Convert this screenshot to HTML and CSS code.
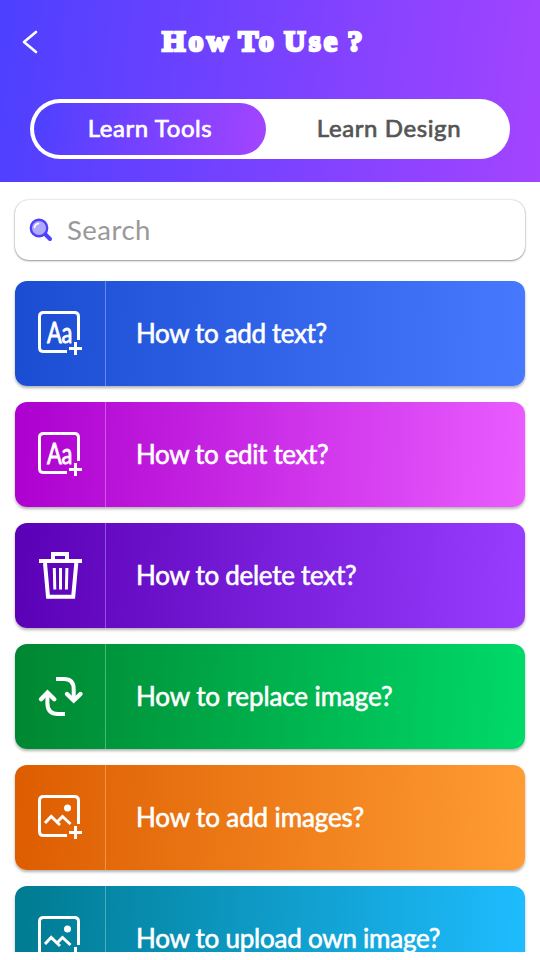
FILE: index.html
```html
<!DOCTYPE html>
<html lang="en">
<head>
<meta charset="utf-8">
<meta name="viewport" content="width=device-width">
<title>How To Use ?</title>
<link rel="stylesheet" href="styles.css">
</head>
<body>
<svg class="sprite" aria-hidden="true">
  <symbol id="text" viewBox="0 0 48 48">
    <path d="M42.5 31V7.500Q42.500 3.500 38.500 3.500H7.500Q3.500 3.500 3.500 7.500V38.500Q3.500 42.500 7.500 42.500H31M33 39.500H46M39.500 33V46" stroke-width="3"/>
    <text class="aa" x="11" y="33.500" textLength="25" lengthAdjust="spacingAndGlyphs">Aa</text>
  </symbol>
  <symbol id="image" viewBox="0 0 48 48">
    <path d="M42.500 31V7.500Q42.500 3.500 38.500 3.500H7.500Q3.500 3.500 3.500 7.500V38.500Q3.500 42.500 7.500 42.500H31M33 39.500H46M39.500 33V46M9 30L15.200 23.500L24 32M20.500 29.500L26.500 23.500L34.500 31" stroke-width="3"/>
    <circle class="solid" cx="31.500" cy="15" r="3.500"/>
  </symbol>
  <symbol id="trash" viewBox="0 0 48 48">
    <path d="M3 10H46M17 8V3H31V8M9 12L12 45.700H37.200L40.300 12" stroke-width="4"/>
    <path d="M18.300 17L18.800 38.500M24.500 17V38.500M30.900 17L30.400 38.500" stroke-width="3"/>
  </symbol>
  <symbol id="replace" viewBox="0 0 48 48">
    <path d="M20 7H28Q37.700 7 37.700 17V27M29 42H22Q11.400 42 11.400 31V21" stroke-width="4"/>
    <path d="M31 22L37.700 28.500L44.500 22M5 27.200L11.500 20.500L18.300 27.200" stroke-width="4.400" stroke-linecap="round"/>
  </symbol>
</svg>
<div class="screen">
  <header class="header">
    <div class="bar">
      <svg class="back" viewBox="0 0 16 24"><path d="M14 2L2 12L14 22"/></svg>
      <h1 class="title">How To Use ?</h1>
    </div>
    <nav class="tabs">
      <div class="tab active"><span>Learn Tools</span></div>
      <div class="tab"><span>Learn Design</span></div>
    </nav>
  </header>
  <main class="content">
    <div class="search">
      <svg class="lens" viewBox="0 0 24 24">
        <path d="M16 16L21 21" stroke="#4f3fff" stroke-width="4" stroke-linecap="round"/>
        <circle cx="10" cy="10" r="8.200" fill="#b0aaff" stroke="#4f3fff" stroke-width="2.400"/>
        <path d="M5.500 9.500Q6 6 9.500 5.500" fill="none" stroke="#fff" stroke-width="1.600" stroke-linecap="round"/>
      </svg>
      <span class="placeholder">Search</span>
    </div>
    <div class="card blue"><div class="icon"><svg><use href="#text"/></svg></div><span class="label">How to add text?</span></div>
    <div class="card pink"><div class="icon"><svg><use href="#text"/></svg></div><span class="label">How to edit text?</span></div>
    <div class="card purple"><div class="icon"><svg><use href="#trash"/></svg></div><span class="label">How to delete text?</span></div>
    <div class="card green"><div class="icon"><svg><use href="#replace"/></svg></div><span class="label">How to replace image?</span></div>
    <div class="card orange"><div class="icon"><svg><use href="#image"/></svg></div><span class="label">How to add images?</span></div>
    <div class="card cyan"><div class="icon"><svg><use href="#image"/></svg></div><span class="label">How to upload own image?</span></div>
  </main>
</div>
</body>
</html>
```
FILE: styles.css
```css
* { box-sizing: border-box; }
body { margin: 0; background: #fff; font-family: Lato, "Liberation Sans", sans-serif; }
.sprite { display: none; }
.screen { display: flex; flex-direction: column; width: 540px; height: 952px; overflow: hidden; }
.header { flex: none; height: 182px; padding: 0 30px; background: linear-gradient(97deg, #4d40ff, #a344ff); }
.bar { display: flex; align-items: center; height: 84px; margin-bottom: 15px; }
.back { width: 16px; height: 24px; margin-left: -8px; fill: none; stroke: #fff; stroke-width: 2.6; stroke-linecap: round; stroke-linejoin: round; }
.title { margin: 0 0 2px 124px; color: #fff; font: bold 30px/36px "Liberation Serif", serif; letter-spacing: 3.2px; word-spacing: -3.5px; white-space: nowrap; -webkit-text-stroke: 2.6px #fff; }
.tabs { display: flex; height: 60px; padding: 4px; border-radius: 30px; background: #fff; }
.tab { display: flex; flex: 1; align-items: center; justify-content: center; padding: 0 0 3px; border-radius: 26px; color: #555; font-size: 24px; letter-spacing: 0.6px; -webkit-text-stroke: 0.7px; }
.tab:last-child { padding-left: 6px; }
.tab.active { flex: 0 0 232px; color: #fff; background: linear-gradient(97deg, #4d40ff, #a344ff); }
.content { flex: 1; min-height: 0; padding: 18px 15px 0; overflow: hidden; }
.search { display: flex; align-items: center; height: 60px; margin-bottom: 21px; padding-left: 14px; border-radius: 14px; background: #fff; box-shadow: 0 1px 2px rgba(0,0,0,.36), 0 0 2px rgba(0,0,0,.25); }
.lens { width: 24px; height: 24px; }
.placeholder { margin: 0 0 1px 14px; color: #999; font-size: 27.5px; letter-spacing: 0.5px; }
.card { display: flex; height: 105px; margin-bottom: 16px; border-radius: 12px; color: #fff; box-shadow: 0 2px 3px rgba(0,0,0,.3); overflow: hidden; }
.icon { width: 91px; padding: 28px 0 0 21px; border-right: 1px solid rgba(255,255,255,.3); }
.icon svg { display: block; width: 48px; height: 48px; fill: none; stroke: #fff; }
.solid { fill: #fff; stroke: none; }
.aa { fill: #fff; stroke: #fff; stroke-width: .9px; font-family: Lato, sans-serif; font-size: 29px; }
.label { align-self: center; margin: 0 0 2px 30px; font-size: 26px; white-space: nowrap; -webkit-text-stroke: 0.6px; }
.blue { background: linear-gradient(92deg, #1b4dd3, #4779ff); letter-spacing: -.36px; }
.pink { background: linear-gradient(92deg, #ad00cf, #e95cff); letter-spacing: -.36px; }
.purple { background: linear-gradient(92deg, #5a00b5, #983cff); letter-spacing: -.28px; }
.green { background: linear-gradient(92deg, #008631, #00da68); letter-spacing: -.1px; }
.orange { background: linear-gradient(92deg, #dd5d00, #ff9c33); letter-spacing: -.12px; }
.cyan { background: linear-gradient(92deg, #007b91, #1ebcff); letter-spacing: -.24px; }
```
